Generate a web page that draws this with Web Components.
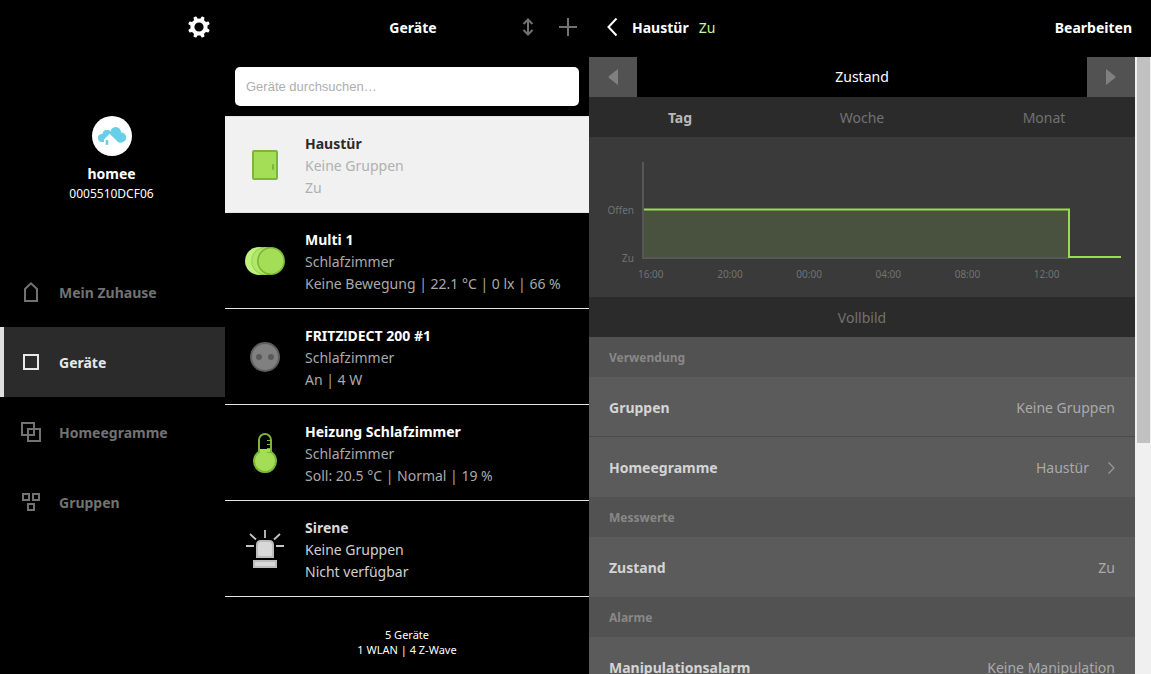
<!DOCTYPE html>
<html lang="de">
<head>
<meta charset="utf-8">
<meta name="viewport" content="width=device-width, initial-scale=1">
<title>homee – Geräte</title>
<style>
  html, body { margin: 0; height: 100%; background: #000; }
  body {
    font-family: "Noto Sans", "Open Sans", sans-serif;
    font-size: 14px;
    line-height: 22px;
    color: #fff;
  }
</style>
</head>
<body>
<homee-app></homee-app>

<script>
const base = `
  *, *::before, *::after { box-sizing: border-box; }
  button { font: inherit; color: inherit; background: none; border: 0; padding: 0; margin: 0; cursor: pointer; }
  a { color: inherit; text-decoration: none; }
  h1, h2, h3, p { margin: 0; padding: 0; font-size: inherit; font-weight: inherit; }
  svg { display: block; }
`;

function component(tag, css, markup) {
  customElements.define(tag, class extends HTMLElement {
    constructor() {
      super();
      this.attachShadow({ mode: 'open' });
    }
    connectedCallback() {
      const html = typeof markup === 'function' ? markup(this) : markup;
      this.shadowRoot.innerHTML = `<style>${base}${css}</style>${html}`;
    }
  });
}

const icons = {
  gear: [24, 24, `<g fill="#fff">${[22.5, 67.5, 112.5, 157.5, 202.5, 247.5, 292.5, 337.5]
      .map(a => `<path d="M9.9 4.5 10.4 1.6Q10.5 1 11.1 1H12.9Q13.5 1 13.6 1.6L14.1 4.5Z" transform="rotate(${a} 12 12)"/>`).join('')}</g>
    <circle cx="12" cy="12" r="6.6" fill="none" stroke="#fff" stroke-width="4"/>`],
  avatar: [40, 40, `<circle cx="20" cy="20" r="20" fill="#fff"/>
    <g fill="#67cfe7"><circle cx="10" cy="22" r="4"/><circle cx="15" cy="18.3" r="4.5"/><path d="M10 18H17V26H10Z"/>
    <circle cx="23.7" cy="16.3" r="5.3"/><circle cx="29.2" cy="21.5" r="5"/><path d="M17.500 17 22 14 30 18V26.500H23Z"/></g>
    <path d="M17.700 17.800 26.500 26.500V31H12V23.500Z" fill="#fff"/>
    <rect x="13.700" y="24" width="2.600" height="4.800" fill="#67cfe7"/>`],
  home: [22, 22, `<path d="M5 20V8L11 2.300 17 8V20Z" fill="none" stroke="currentColor" stroke-width="2"/>`],
  square: [22, 22, `<path d="M4 4H18V18H4Z" fill="none" stroke="currentColor" stroke-width="2"/>`],
  layers: [22, 22, `<path d="M2 2H14V14H2ZM8 8H20V20H8Z" fill="none" stroke="currentColor" stroke-width="2"/>`],
  groups: [22, 22, `<path d="M3 3H9V9H3ZM13 3H19V9H13ZM8 13H14V19H8Z" fill="none" stroke="currentColor" stroke-width="2"/>`],
  sort: [14, 18, `<path d="M7 2V16M2.500 6 7 1.500 11.500 6M2.500 12 7 16.500 11.500 12" fill="none" stroke="#727272" stroke-width="2"/>`],
  plus: [18, 18, `<path d="M9 0V18M0 9H18" fill="none" stroke="#727272" stroke-width="2"/>`],
  back: [12, 20, `<path d="M10.500 1.500 2.500 10 10.500 18.500" fill="none" stroke="#fff" stroke-width="2"/>`],
  chevron: [8, 14, `<path d="M1.500 1.500 7 7 1.500 12.500" fill="none" stroke="#9b9b9b" stroke-width="1.200"/>`],
  left: [10, 16, `<path d="M10 0V16L1 9Q0 8 1 7Z" fill="#808080"/>`],
  right: [10, 16, `<path d="M0 0V16L9 9Q10 8 9 7Z" fill="#808080"/>`],
  door: [40, 40, `<rect x="8" y="6" width="24" height="28" rx="1" fill="#a4de57" stroke="#7cb638" stroke-width="2"/>
    <rect x="27" y="19" width="2" height="6" rx="1" fill="#7cb638"/>`],
  multi: [40, 40, `<circle cx="14" cy="20" r="14" fill="#bef17e"/>
    <circle cx="20" cy="20" r="13.300" fill="#b0e868" stroke="#9fd95b" stroke-width="1.400"/>
    <circle cx="26" cy="20" r="13.200" fill="#a4de57" stroke="#7cb638" stroke-width="1.600"/>`],
  socket: [40, 40, `<circle cx="20" cy="20" r="14" fill="#808080" stroke="#5e5e5e" stroke-width="2"/>
    <circle cx="14" cy="20" r="3" fill="#5a5a5a"/><circle cx="26" cy="20" r="3" fill="#5a5a5a"/>`],
  thermo: [40, 40, `<path d="M14 16H26V19A11 11 0 1 1 14 19Z" fill="#a4de57"/>
    <path d="M14 18.800V7A6 6 0 0 1 26 7V18.800A11 11 0 1 1 14 18.800Z" fill="none" stroke="#7cb638" stroke-width="2"/>
    <path d="M22 7.500H26M22 11.500H26M22 15.500H26M22 19.500H26" stroke="#7cb638" stroke-width="1"/>`],
  siren: [40, 40, `<path d="M12 28V16Q12 12 16 12H24Q28 12 28 16V28Z" fill="#d8d8d8" stroke="#bcbcbc" stroke-width="2"/>
    <rect x="9" y="32" width="22" height="6" fill="#d8d8d8" stroke="#bcbcbc" stroke-width="2"/>
    <path d="M20 1V9M5 5 11 10.500M35 5 29 10.500M1 17H9M31 17H39" stroke="#c4c4c4" stroke-width="1.800"/>`]
};

component('homee-icon', `:host { display: block; flex: none; }`, el => {
  const [w, h, body] = icons[el.getAttribute('name')];
  return `<svg width="${w}" height="${h}" viewBox="0 0 ${w} ${h}" aria-hidden="true">${body}</svg>`;
});

/* ---------- sidebar ---------- */
component('nav-item', `
  :host { display: block; }
  a { display: flex; align-items: center; gap: 17px; height: 70px; padding-left: 16px;
      border-left: 4px solid transparent; color: #727272; font-weight: 700; }
  span { padding-top: 2px; }
  :host([active]) a { background: #2b2b2b; border-color: #e0e0e0; color: #e8e8e8; }
`, el => `<a href="#"><homee-icon name="${el.getAttribute('icon')}"></homee-icon><span><slot></slot></span></a>`);

component('app-sidebar', `
  :host { display: flex; flex-direction: column; background: #000; }
  .top { display: flex; justify-content: flex-end; align-items: center; height: 54px; padding-right: 14px; }
  .profile { display: flex; flex-direction: column; align-items: center; padding: 62px 2px 54px 0; text-align: center; }
  .name { margin-top: 7px; font-weight: 700; }
  .id { font-size: 12px; line-height: 18px; }
`, `
  <div class="top"><button aria-label="Einstellungen"><homee-icon name="gear"></homee-icon></button></div>
  <div class="profile">
    <homee-icon name="avatar"></homee-icon>
    <p class="name">homee</p>
    <p class="id">0005510DCF06</p>
  </div>
  <nav>
    <nav-item icon="home">Mein Zuhause</nav-item>
    <nav-item icon="square" active>Geräte</nav-item>
    <nav-item icon="layers">Homeegramme</nav-item>
    <nav-item icon="groups">Gruppen</nav-item>
  </nav>
`);

/* ---------- device list ---------- */
component('device-item', `
  :host { display: block; border-bottom: 1px solid #e3e3e3; --title: #fff; --text: #aaa; }
  :host([active]) { background: #f1f1f1; --title: #2b2b2b; --text: #b0b0b0; }
  :host([offline]) { --title: #dadada; --text: #d0d0d0; }
  a { display: flex; align-items: center; gap: 20px; height: 95px; padding: 1px 20px 0; color: var(--text); }
  .text { padding-top: 2px; }
  h2 { font-weight: 700; color: var(--title); }
`, el => `<a href="#">
    <homee-icon name="${el.getAttribute('icon')}"></homee-icon>
    <div class="text"><h2><slot name="title"></slot></h2><p><slot name="group"></slot></p><p><slot></slot></p></div>
  </a>`);

component('device-list', `
  :host { display: flex; flex-direction: column; min-width: 0; background: #000; }
  header { display: grid; grid-template-columns: 1fr auto 1fr; align-items: center; height: 54px; padding: 0 1px 0 13px; }
  h1 { padding-top: 2px; font-weight: 700; }
  .tools { display: flex; justify-content: flex-end; }
  .tools button { display: grid; place-items: center; width: 40px; height: 40px; }
  .search { padding: 13px 10px 10px; }
  input { display: block; width: 100%; height: 39px; padding: 0 11px; border: 0; border-radius: 5px;
          background: #fff; color: #2b2b2b; font: 13px "Liberation Sans", sans-serif; outline: 0; }
  input::placeholder { color: #aeaeae; opacity: 1; }
  .items { border-top: 1px solid #e3e3e3; }
  footer { padding: 30px 0 16px; text-align: center; font-size: 11px; line-height: 15px; }
`, `
  <header>
    <span></span><h1>Geräte</h1>
    <div class="tools">
      <button aria-label="Sortieren"><homee-icon name="sort"></homee-icon></button>
      <button aria-label="Hinzufügen"><homee-icon name="plus"></homee-icon></button>
    </div>
  </header>
  <div class="search"><input type="search" placeholder="Geräte durchsuchen…" aria-label="Geräte durchsuchen"></div>
  <div class="items">
    <device-item icon="door" active><span slot="title">Haustür</span><span slot="group">Keine Gruppen</span>Zu</device-item>
    <device-item icon="multi"><span slot="title">Multi 1</span><span slot="group">Schlafzimmer</span>Keine Bewegung | 22.1 °C | 0 lx | 66 %</device-item>
    <device-item icon="socket"><span slot="title">FRITZ!DECT 200 #1</span><span slot="group">Schlafzimmer</span>An | 4 W</device-item>
    <device-item icon="thermo"><span slot="title">Heizung Schlafzimmer</span><span slot="group">Schlafzimmer</span>Soll: 20.5 °C | Normal | 19 %</device-item>
    <device-item icon="siren" offline><span slot="title">Sirene</span><span slot="group">Keine Gruppen</span>Nicht verfügbar</device-item>
  </div>
  <footer><p>5 Geräte</p><p>1 WLAN | 4 Z-Wave</p></footer>
`);

/* ---------- detail pane ---------- */
component('state-chart', `
  :host { display: grid; grid-template-columns: 45px 1fr; column-gap: 8px; height: 160px;
          padding: 25px 14px 0 0; background: #3a3a3a; color: #727272; font-size: 10px; line-height: 16px; align-content: start; }
  .y { display: flex; flex-direction: column; justify-content: flex-end; gap: 32px; padding-bottom: 2px; text-align: right; }
  .y span:last-child { margin-bottom: -8px; }
  svg { width: 100%; height: 98px; overflow: visible; }
  .x { grid-column: 2; display: grid; grid-template-columns: repeat(6, 1fr); margin: 6px 8px 0 -4px; }
`, `
  <div class="y"><span>Offen</span><span>Zu</span></div>
  <svg viewBox="0 0 479 98" preserveAspectRatio="none" role="img" aria-label="Verlauf Zustand">
    <rect x="2" y="47" width="425" height="48" fill="#49523f"/>
    <path d="M1 0V96H427" fill="none" stroke="#575757" stroke-width="2"/>
    <path d="M2 47.500H427V95H479" fill="none" stroke="#9bdb4e" stroke-width="2"/>
  </svg>
  <div class="x"><span>16:00</span><span>20:00</span><span>00:00</span><span>04:00</span><span>08:00</span><span>12:00</span></div>
`);

component('section-title', `
  :host { display: block; }
  h3 { height: 40px; padding-left: 20px; background: #525252; color: #888; font-size: 12px; line-height: 42px; font-weight: 700; }
`, `<h3><slot></slot></h3>`);

component('info-row', `
  :host { display: block; background: #5b5b5b; }
  :host([divided]) { border-bottom: 1px solid #4a4a4a; }
  .row { display: flex; justify-content: space-between; align-items: center; height: 60px; padding: 1px 20px 0; }
  :host([divided]) .row { height: 59px; padding-top: 2px; }
  .label { font-weight: 700; color: #d4d4d4; }
  .value { display: flex; align-items: center; gap: 18px; color: #aaa; }
`, el => {
  const link = el.hasAttribute('link');
  const tag = link ? 'a href="#"' : 'div';
  return `<${tag} class="row"><span class="label"><slot name="label"></slot></span>
    <span class="value"><span><slot></slot></span>${link ? '<homee-icon name="chevron"></homee-icon>' : ''}</span></${link ? 'a' : 'div'}>`;
});

component('detail-pane', `
  :host { display: flex; flex-direction: column; min-width: 0; min-height: 0; }
  header { flex: none; display: flex; align-items: center; height: 57px; padding: 0 19px 3px 17px; font-weight: 700; }
  header h1 { margin: 0 10px 0 14px; }
  header h1, .state, .edit { padding-top: 2px; }
  .state { font-weight: 400; color: #ccf19d; }
  .edit { margin-left: auto; font-weight: 700; }
  .body { flex: 1; min-height: 0; display: grid; grid-template-columns: 1fr 16px; }
  .content { min-width: 0; overflow: hidden; background: #5b5b5b; }
  .bar { background: #f0f0f0; padding: 0 1px 0 2px; }
  .thumb { height: 386px; background: #c1c1c1; }
  .pager { display: grid; grid-template-columns: 48px 1fr 48px; height: 40px; background: #000; text-align: center; line-height: 40px; }
  .pager button { display: grid; place-items: center; background: #525252; }
  .tabs { display: grid; grid-template-columns: repeat(3, 1fr); height: 40px; background: #2b2b2b; color: #727272; }
  .tabs button, .full { padding-top: 2px; }
  .tabs [aria-selected="true"] { color: #b8b8b8; font-weight: 700; }
  .full { display: block; width: 100%; height: 40px; background: #2b2b2b; color: #727272; }
`, `
  <header>
    <button aria-label="Zurück"><homee-icon name="back"></homee-icon></button>
    <h1>Haustür</h1><span class="state">Zu</span>
    <button class="edit">Bearbeiten</button>
  </header>
  <div class="body">
    <div class="content">
      <div class="pager">
        <button aria-label="Vorheriges"><homee-icon name="left"></homee-icon></button>
        <h2>Zustand</h2>
        <button aria-label="Nächstes"><homee-icon name="right"></homee-icon></button>
      </div>
      <div class="tabs" role="tablist">
        <button role="tab" aria-selected="true">Tag</button>
        <button role="tab" aria-selected="false">Woche</button>
        <button role="tab" aria-selected="false">Monat</button>
      </div>
      <state-chart></state-chart>
      <button class="full">Vollbild</button>
      <section-title>Verwendung</section-title>
      <info-row divided><span slot="label">Gruppen</span>Keine Gruppen</info-row>
      <info-row link><span slot="label">Homeegramme</span>Haustür</info-row>
      <section-title>Messwerte</section-title>
      <info-row><span slot="label">Zustand</span>Zu</info-row>
      <section-title>Alarme</section-title>
      <info-row><span slot="label">Manipulationsalarm</span>Keine Manipulation</info-row>
    </div>
    <div class="bar" aria-hidden="true"><div class="thumb"></div></div>
  </div>
`);

component('homee-app', `
  :host { display: grid; grid-template-columns: 225px 364px minmax(0, 1fr); grid-template-rows: minmax(0, 1fr); height: 100vh; overflow: hidden; }
`, `
  <app-sidebar></app-sidebar>
  <device-list></device-list>
  <detail-pane></detail-pane>
`);
</script>
</body>
</html>
